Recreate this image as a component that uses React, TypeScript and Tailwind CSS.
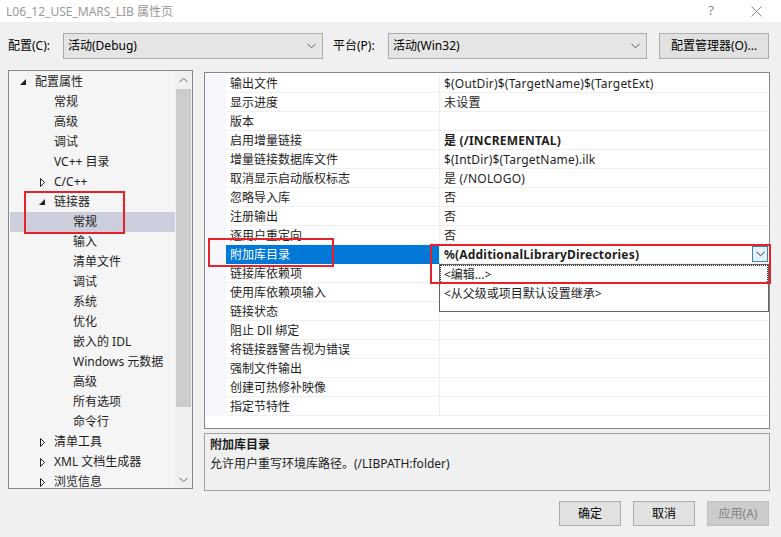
import React from "react";

const font = {
	fontFamily: '"Noto Sans", "Noto Sans CJK SC", sans-serif',
};

type TreeItem = { t: string; lvl: 0 | 1 | 2; exp?: boolean; col?: boolean; sel?: boolean };

const treeItems: TreeItem[] = [
	{ t: "配置属性", lvl: 0, exp: true },
	{ t: "常规", lvl: 1 },
	{ t: "高级", lvl: 1 },
	{ t: "调试", lvl: 1 },
	{ t: "VC++ 目录", lvl: 1 },
	{ t: "C/C++", lvl: 1, col: true },
	{ t: "链接器", lvl: 1, exp: true },
	{ t: "常规", lvl: 2, sel: true },
	{ t: "输入", lvl: 2 },
	{ t: "清单文件", lvl: 2 },
	{ t: "调试", lvl: 2 },
	{ t: "系统", lvl: 2 },
	{ t: "优化", lvl: 2 },
	{ t: "嵌入的 IDL", lvl: 2 },
	{ t: "Windows 元数据", lvl: 2 },
	{ t: "高级", lvl: 2 },
	{ t: "所有选项", lvl: 2 },
	{ t: "命令行", lvl: 2 },
	{ t: "清单工具", lvl: 1, col: true },
	{ t: "XML 文档生成器", lvl: 1, col: true },
	{ t: "浏览信息", lvl: 1, col: true },
];

const props: { n: string; v: string; bold?: boolean; sel?: boolean }[] = [
	{ n: "输出文件", v: "$(OutDir)$(TargetName)$(TargetExt)" },
	{ n: "显示进度", v: "未设置" },
	{ n: "版本", v: "" },
	{ n: "启用增量链接", v: "是 (/INCREMENTAL)", bold: true },
	{ n: "增量链接数据库文件", v: "$(IntDir)$(TargetName).ilk" },
	{ n: "取消显示启动版权标志", v: "是 (/NOLOGO)" },
	{ n: "忽略导入库", v: "否" },
	{ n: "注册输出", v: "否" },
	{ n: "逐用户重定向", v: "否" },
	{ n: "附加库目录", v: "%(AdditionalLibraryDirectories)", bold: true, sel: true },
	{ n: "链接库依赖项", v: "" },
	{ n: "使用库依赖项输入", v: "" },
	{ n: "链接状态", v: "" },
	{ n: "阻止 Dll 绑定", v: "" },
	{ n: "将链接器警告视为错误", v: "" },
	{ n: "强制文件输出", v: "" },
	{ n: "创建可热修补映像", v: "" },
	{ n: "指定节特性", v: "" },
];

const indent = ["pl-[8px]", "pl-[27px]", "pl-[46px]"];

function Chevron({ className = "" }: { className?: string }) {
	return (
		<svg width="9" height="6" viewBox="0 0 9 6" className={className}>
			<path d="M0.5 0.8 L4.5 4.8 L8.5 0.8" fill="none" stroke="currentColor" strokeWidth="1" />
		</svg>
	);
}

function Combo({ text, w }: { text: string; w: string }) {
	return (
		<div
			className={`${w} h-[26px] flex items-center justify-between bg-[#e5e5e5] border border-[#acacac] pl-[4px] pr-[6px]`}
		>
			<span className="text-[12px] text-black">{text}</span>
			<Chevron className="text-[#606060]" />
		</div>
	);
}

function TreeRow({ item }: { item: TreeItem }) {
	return (
		<div
			className={`h-[20px] flex items-center ${indent[item.lvl]} ${item.sel ? "bg-[#cccedb]" : ""}`}
		>
			<div className="w-[17px] h-[20px] flex items-center">
				{item.exp && (
					<svg width="10" height="20" viewBox="0 0 10 20">
						<polygon points="2,13 8,13 8,7" fill="#1e1e1e" />
					</svg>
				)}
				{item.col && (
					<svg width="10" height="20" viewBox="0 0 10 20">
						<polygon points="3.5,6.5 3.5,14.5 7.5,10.5" fill="none" stroke="#1e1e1e" strokeWidth="1" />
					</svg>
				)}
			</div>
			<span className="text-[12px] text-[#1e1e1e] whitespace-nowrap">{item.t}</span>
		</div>
	);
}

function Button({ text, disabled }: { text: string; disabled?: boolean }) {
	return (
		<div
			className={`w-[62px] h-[25px] flex items-center justify-center border text-[12px] ${
				disabled
					? "bg-[#cccccc] border-[#bfbfbf] text-[#838383]"
					: "bg-[#e1e1e1] border-[#adadad] text-black"
			}`}
		>
			{text}
		</div>
	);
}

export default function App() {
	return (
		<div className="relative w-[781px] h-[537px] bg-[#f0f0f0] overflow-hidden" style={font}>
			{/* title bar */}
			<div className="h-[22px] bg-white flex items-center justify-between pl-[6px] pr-[19px]">
				<span className="text-[12px] text-[#999999] pt-[2px]">L06_12_USE_MARS_LIB 属性页</span>
				<div className="flex items-center gap-[37px] text-[#8a8a8a]">
					<span className="text-[13px]">?</span>
					<svg width="11" height="11" viewBox="0 0 11 11">
						<path d="M0.5 0.5 L10.5 10.5 M10.5 0.5 L0.5 10.5" stroke="#8a8a8a" strokeWidth="1" />
					</svg>
				</div>
			</div>

			{/* config row */}
			<div className="mt-[11px] flex items-center pl-[8px]">
				<span className="w-[55px] text-[12px] text-black">配置(C):</span>
				<Combo text="活动(Debug)" w="w-[260px]" />
				<span className="ml-[10px] w-[55px] text-[12px] text-black">平台(P):</span>
				<Combo text="活动(Win32)" w="w-[259px]" />
				<div className="ml-[12px] w-[110px] h-[26px] flex items-center justify-center bg-[#e1e1e1] border border-[#adadad] text-[12px] text-black">
					配置管理器(O)...
				</div>
			</div>

			{/* main */}
			<div className="mt-[11px] flex pl-[8px]">
				{/* tree */}
				<div className="w-[185px] h-[419px] border border-[#828790] bg-[#f5f5f5] flex">
					<div className="flex-1 pl-[1px] pt-[1px] overflow-hidden">
						{treeItems.map((it, i) => (
							<TreeRow key={i} item={it} />
						))}
					</div>
					<div className="w-[17px] bg-[#f0f0f0] flex flex-col items-center">
						<div className="h-[18px] flex items-center justify-center text-[#606060]">
							<Chevron className="rotate-180" />
						</div>
						<div className="w-[15px] h-[318px] bg-[#cdcdcd]" />
						<div className="flex-1" />
						<div className="h-[17px] flex items-center justify-center text-[#606060]">
							<Chevron />
						</div>
					</div>
				</div>

				{/* right side */}
				<div className="ml-[11px] w-[566px] flex flex-col">
					<div className="relative mt-[2px] h-[357px] border border-[#828790] bg-white">
						<div className="pt-[1px]">
							{props.map((p, i) => (
								<div key={i} className="flex h-[19px]">
									<div className="w-[21px] bg-[#f5f7fb]" />
									<div
										className={`w-[214px] flex items-center pl-[4px] pt-[1px] text-[12px] border-b border-r border-[#f0f0f0] ${
											p.sel ? "bg-[#0078d7] text-white border-b-[#0078d7]" : "text-[#1e1e1e]"
										}`}
									>
										{p.n}
									</div>
									<div
										className={`flex-1 flex items-center justify-between pl-[4px] pr-[1px] text-[12px] text-[#1e1e1e] border-b border-[#f0f0f0] ${
											p.bold ? "font-bold" : ""
										}`}
									>
										<span className="pt-[1px] tracking-[0.2px]">{p.v}</span>
										{p.sel && (
											<div className="w-[16px] h-[16px] flex items-center justify-center bg-[#e5f1fb] border border-[#3c7fb1] text-[#333333]">
												<Chevron />
											</div>
										)}
									</div>
								</div>
							))}
						</div>
						{/* dropdown list */}
						<div className="absolute left-[234px] top-[191px] w-[330px] h-[48px] bg-white border border-[#646464] text-[12px] text-[#1e1e1e]">
							<div className="h-[19px] flex items-center pl-[3px] border border-dotted border-[#333333]">
								&lt;编辑...&gt;
							</div>
							<div className="h-[19px] flex items-center pl-[4px]">&lt;从父级或项目默认设置继承&gt;</div>
						</div>
					</div>

					{/* description */}
					<div className="mt-[4px] h-[58px] border border-[#a0a0a0] pl-[5px] pt-[1px] text-[12px] text-[#1e1e1e]">
						<div className="h-[19px] flex items-center font-bold">附加库目录</div>
						<div className="h-[19px] flex items-center">允许用户重写环境库路径。(/LIBPATH:folder)</div>
					</div>
				</div>
			</div>

			{/* buttons */}
			<div className="mt-[10px] flex justify-end gap-[12px] pr-[12px]">
				<Button text="确定" />
				<Button text="取消" />
				<Button text="应用(A)" disabled />
			</div>

			{/* red annotation boxes */}
			<div className="absolute left-[24px] top-[191px] w-[101px] h-[43px] border-2 border-[#e8202a]" />
			<div className="absolute left-[208px] top-[238px] w-[126px] h-[29px] border-2 border-[#e8202a]" />
			<div className="absolute left-[430px] top-[244px] w-[341px] h-[40px] border-2 border-[#e8202a]" />
		</div>
	);
}
